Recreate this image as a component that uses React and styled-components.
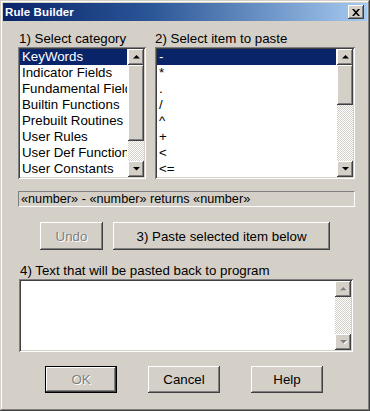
import React from 'react';
import styled, { createGlobalStyle, css } from 'styled-components';

const GlobalStyle = createGlobalStyle`
  html, body {
    margin: 0;
    padding: 0;
    background: #d4d0c8;
  }
  * {
    box-sizing: border-box;
  }
`;

const FACE = '#d4d0c8';
const FONT = `"Liberation Sans", Arial, sans-serif`;

const raised = css`
  background: ${FACE};
  box-shadow: inset -1px -1px #404040, inset 1px 1px #fff,
    inset -2px -2px #808080, inset 2px 2px ${FACE};
`;

const sunken = css`
  box-shadow: inset 1px 1px #808080, inset -1px -1px #fff,
    inset 2px 2px #404040, inset -2px -2px ${FACE};
`;

const Window = styled.div`
  width: 370px;
  height: 411px;
  padding: 3px;
  background: ${FACE};
  box-shadow: inset -1px -1px #404040, inset 1px 1px ${FACE},
    inset -2px -2px #808080, inset 2px 2px #fff;
  display: flex;
  flex-direction: column;
  font-family: ${FONT};
  font-size: 13.3px;
  color: #000;
`;

const TitleBar = styled.div`
  height: 18px;
  display: flex;
  align-items: center;
  justify-content: space-between;
  padding: 0 3px 0 2px;
  background: linear-gradient(to right, #0a246a 0%, #2a5596 40%, #a6caf0 100%);
`;

const TitleText = styled.span`
  color: #fff;
  font-weight: bold;
  font-size: 11.5px;
  letter-spacing: 0.1px;
`;

const CloseButton = styled.div`
  ${raised};
  width: 16px;
  height: 14px;
  display: flex;
  align-items: center;
  justify-content: center;
`;

const Content = styled.div`
  display: flex;
  flex-direction: column;
  padding: 10px 12px 0 15px;
`;

const ListsRow = styled.div`
  display: flex;
  gap: 9px;
`;

const Column = styled.div`
  display: flex;
  flex-direction: column;
  width: ${(p) => p.$width}px;
`;

const Label = styled.div`
  line-height: 15px;
  height: 15px;
  white-space: nowrap;
  margin-top: ${(p) => p.$top || 0}px;
  margin-left: ${(p) => p.$indent ?? 1}px;
`;

const ListBox = styled.div`
  ${sunken};
  margin-top: 1px;
  height: 132px;
  background: #fff;
  padding: 2px;
  display: flex;
`;

const Items = styled.div`
  flex: 1;
  min-width: 0;
  overflow: hidden;
  padding-right: 1px;
`;

const Item = styled.div`
  height: 16px;
  line-height: 16px;
  padding-left: 2px;
  white-space: nowrap;
  overflow: hidden;
  background: ${(p) => (p.$selected ? '#0a246a' : 'transparent')};
  color: ${(p) => (p.$selected ? '#fff' : '#000')};
`;

const ScrollBar = styled.div`
  width: 16px;
  display: flex;
  flex-direction: column;
  flex-shrink: 0;
`;

const ArrowButton = styled.div`
  ${raised};
  width: 16px;
  height: 16px;
  flex-shrink: 0;
  display: flex;
  align-items: center;
  justify-content: center;
`;

const Track = styled.div`
  flex: 1;
  display: flex;
  flex-direction: column;
  background: repeating-conic-gradient(#fff 0 25%, ${FACE} 0 50%) 0 0 / 2px 2px;
`;

const Thumb = styled.div`
  ${raised};
  height: ${(p) => p.$size}px;
  flex-shrink: 0;
`;

const DescBox = styled.div`
  margin-top: 12px;
  width: 337px;
  height: 16px;
  line-height: 15px;
  padding: 0 2px;
  font-size: 12.7px;
  border-top: 1px solid #808080;
  border-left: 1px solid #808080;
  border-bottom: 1px solid #fff;
  border-right: 1px solid #fff;
  white-space: nowrap;
`;

const ButtonRow = styled.div`
  display: flex;
  gap: ${(p) => p.$gap}px;
  margin-top: ${(p) => p.$top}px;
  padding-left: ${(p) => p.$indent}px;
`;

const Button = styled.div`
  ${raised};
  width: ${(p) => p.$width}px;
  height: ${(p) => p.$height}px;
  display: flex;
  align-items: center;
  justify-content: center;
  white-space: nowrap;
  color: ${(p) => (p.$disabled ? '#808080' : '#000')};
  text-shadow: ${(p) => (p.$disabled ? '1px 1px #fff' : 'none')};
  ${(p) =>
    p.$default &&
    css`
      box-shadow: inset 0 0 0 1px #000, inset -2px -2px #404040,
        inset 2px 2px #fff, inset -3px -3px #808080;
    `}
`;

const TextArea = styled.div`
  ${sunken};
  margin-top: 1px;
  margin-left: 1px;
  width: 334px;
  height: 73px;
  background: #fff;
  padding: 2px;
  display: flex;
  justify-content: flex-end;
`;

const Arrow = ({ down, disabled }) => (
  <svg width="7" height="4" viewBox="0 0 7 4" style={{ overflow: 'visible' }}>
    {disabled && (
      <polygon
        points={down ? '1,1 8,1 4.5,4.5' : '4.5,0.5 8,4 1,4'}
        fill="#fff"
      />
    )}
    <polygon
      points={down ? '0,0 7,0 3.5,3.5' : '3.5,0 7,3.5 0,3.5'}
      fill={disabled ? '#808080' : '#000'}
    />
  </svg>
);

const Scroll = ({ thumb, disabled }) => (
  <ScrollBar>
    <ArrowButton>
      <Arrow disabled={disabled} />
    </ArrowButton>
    <Track>{thumb ? <Thumb $size={thumb} /> : null}</Track>
    <ArrowButton>
      <Arrow down disabled={disabled} />
    </ArrowButton>
  </ScrollBar>
);

const categories = [
  'KeyWords',
  'Indicator Fields',
  'Fundamental Fields',
  'Builtin Functions',
  'Prebuilt Routines',
  'User Rules',
  'User Def Functions',
  'User Constants',
];

const operators = ['-', '*', '.', '/', '^', '+', '<', '<='];

const App = () => (
  <>
    <GlobalStyle />
    <Window>
      <TitleBar>
        <TitleText>Rule Builder</TitleText>
        <CloseButton>
          <svg width="8" height="7" viewBox="0 0 8 7">
            <path
              d="M0 0h2l2 2.2L6 0h2L5 3.5 8 7H6L4 4.8 2 7H0l3-3.5z"
              fill="#000"
            />
          </svg>
        </CloseButton>
      </TitleBar>
      <Content>
        <ListsRow>
          <Column $width={128}>
            <Label>1) Select category</Label>
            <ListBox>
              <Items>
                {categories.map((c, i) => (
                  <Item key={c} $selected={i === 0}>
                    {c}
                  </Item>
                ))}
              </Items>
              <Scroll thumb={76} />
            </ListBox>
          </Column>
          <Column $width={200}>
            <Label $indent={0}>2) Select item to paste</Label>
            <ListBox>
              <Items>
                {operators.map((o, i) => (
                  <Item key={o} $selected={i === 0}>
                    {o}
                  </Item>
                ))}
              </Items>
              <Scroll thumb={40} />
            </ListBox>
          </Column>
        </ListsRow>
        <DescBox>«number» - «number» returns «number»</DescBox>
        <ButtonRow $gap={10} $top={15} $indent={22}>
          <Button $width={63} $height={28} $disabled>
            Undo
          </Button>
          <Button $width={217} $height={28}>
            3) Paste selected item below
          </Button>
        </ButtonRow>
        <Label $top={13} $indent={2}>
          4) Text that will be pasted back to program
        </Label>
        <TextArea>
          <Scroll disabled />
        </TextArea>
        <ButtonRow $gap={31} $top={14} $indent={27}>
          <Button $width={72} $height={27} $disabled $default>
            OK
          </Button>
          <Button $width={72} $height={27}>
            Cancel
          </Button>
          <Button $width={72} $height={27}>
            Help
          </Button>
        </ButtonRow>
      </Content>
    </Window>
  </>
);

export default App;
